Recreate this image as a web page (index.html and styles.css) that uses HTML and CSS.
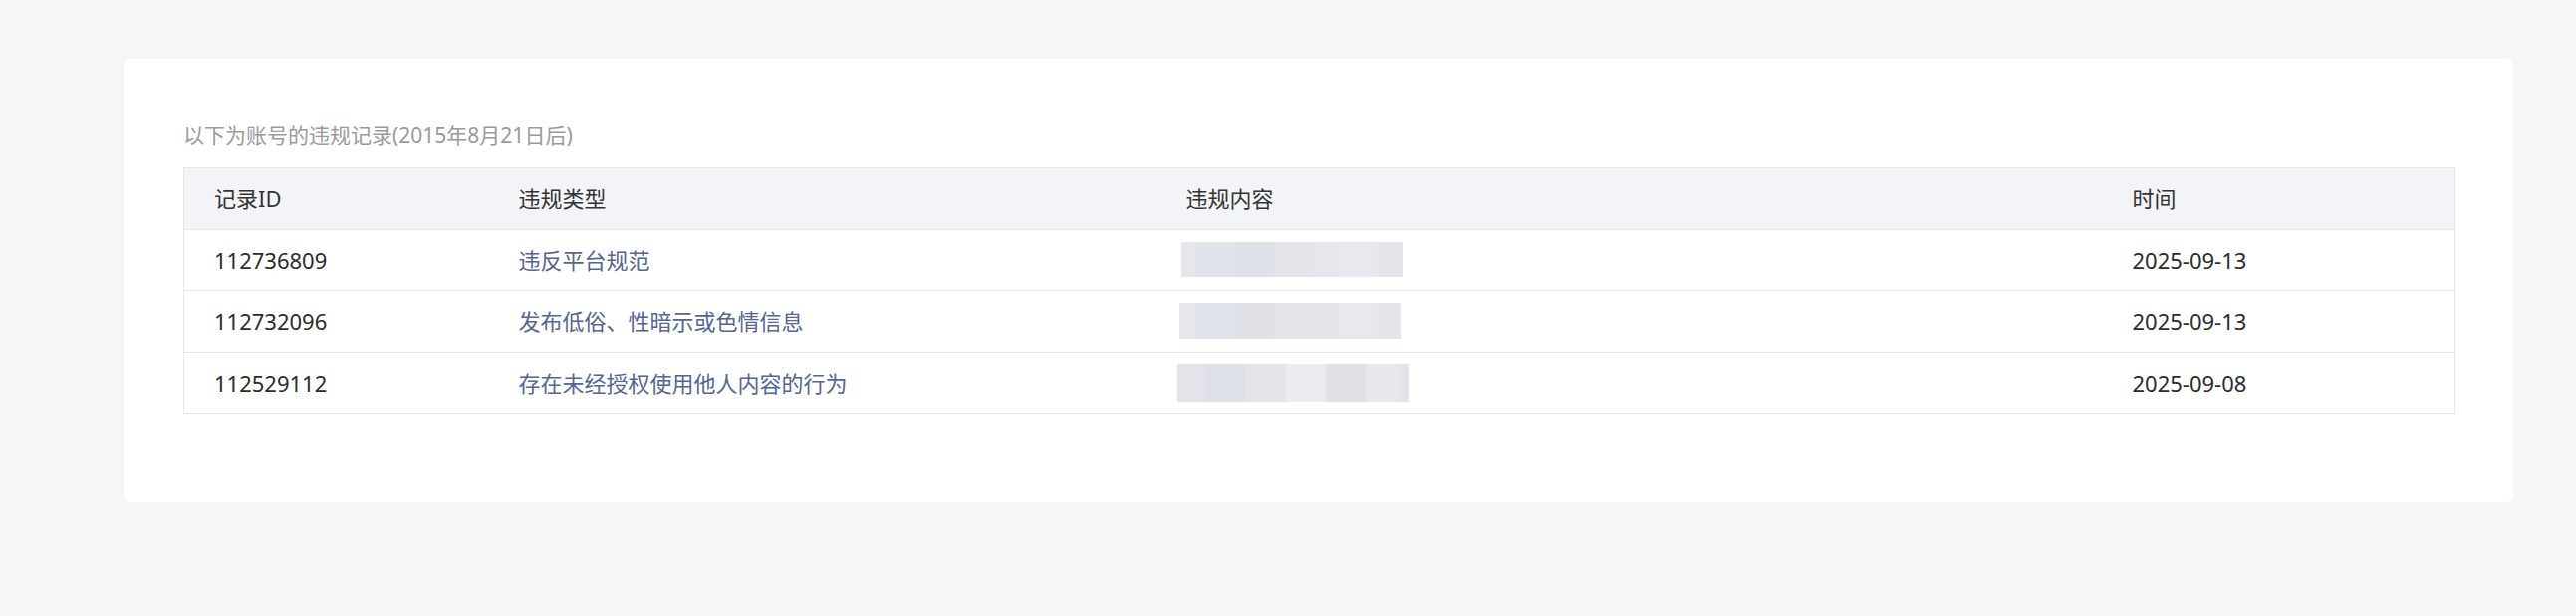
FILE: index.html
```html
<!DOCTYPE html>
<html lang="zh-CN">
<head>
<meta charset="utf-8">
<title>违规记录</title>
<link rel="stylesheet" href="styles.css">
</head>
<body>
<div class="page">
  <section class="card">
    <p class="note">以下为账号的违规记录(2015年8月21日后)</p>
    <table class="records">
      <colgroup>
        <col class="c-id"><col class="c-type"><col class="c-content"><col class="c-time">
      </colgroup>
      <thead>
        <tr><th>记录ID</th><th>违规类型</th><th>违规内容</th><th>时间</th></tr>
      </thead>
      <tbody>
        <tr>
          <td>112736809</td>
          <td class="type">违反平台规范</td>
          <td><span class="blur blur-1"></span></td>
          <td>2025-09-13</td>
        </tr>
        <tr>
          <td>112732096</td>
          <td class="type">发布低俗、性暗示或色情信息</td>
          <td><span class="blur blur-2"></span></td>
          <td>2025-09-13</td>
        </tr>
        <tr>
          <td>112529112</td>
          <td class="type">存在未经授权使用他人内容的行为</td>
          <td><span class="blur blur-3"></span></td>
          <td>2025-09-08</td>
        </tr>
      </tbody>
    </table>
  </section>
</div>
</body>
</html>
```

FILE: styles.css
```css
html, body {
  margin: 0;
  padding: 0;
}
body {
  background: #f6f7f9;
  font-family: "Noto Sans", "Noto Sans CJK SC", sans-serif;
  color: #333;
}
.page {
  padding: 59px 63px 115px 124px;
}
.card {
  background: #fff;
  border-radius: 6px;
  box-shadow: 0 0 12px rgba(0, 0, 0, 0.02);
  padding: 61px 59px 89px 60px;
}
.note {
  margin: 0 0 18px;
  font-size: 21px;
  line-height: 30px;
  color: #9a9a9a;
}
.records {
  width: 100%;
  border-collapse: collapse;
  table-layout: fixed;
  border: 1px solid #e5e6eb;
  font-size: 22px;
}
.c-id { width: 306px; }
.c-type { width: 670px; }
.c-content { width: 950px; }
.c-time { width: 354px; }
.records th,
.records td {
  text-align: left;
  font-weight: 400;
  height: 60.5px;
  padding: 0 0 0 30px;
  line-height: 30px;
  vertical-align: middle;
  border-bottom: 1px solid #e5e6eb;
  white-space: nowrap;
}
.records th {
  background: #f3f4f8;
  color: #333;
}
.records td {
  color: #2b2b2b;
}
.records td.type {
  color: #55658f;
}
.blur {
  display: block;
  margin-left: -5px;
  height: 35px;
}
.blur-1 {
  width: 222px;
  background: linear-gradient(90deg,
    #e6e7ec 0 14px, #e1e3ea 14px 54px, #dfe1e8 54px 93px,
    #e3e5ea 93px 133px, #e6e7ec 133px 158px, #e8e9ee 158px 197px,
    #e4e5eb 197px 222px);
}
.blur-2 {
  width: 222px;
  margin-left: -7px;
  height: 36px;
  background: linear-gradient(90deg,
    #e7e8ed 0 16px, #e1e3ea 16px 56px, #dfe1e7 56px 95px,
    #e3e5ea 95px 159px, #e8e9ee 159px 199px, #e4e5eb 199px 222px);
}
.blur-3 {
  width: 232px;
  margin-left: -9px;
  height: 38px;
  background: linear-gradient(90deg,
    #e3e4e9 0 28px, #dfe1e9 28px 68px, #e4e5ea 68px 109px,
    #ebecf0 109px 149px, #e0e1e7 149px 189px, #e7e8ed 189px 223px,
    #e3e4e9 223px 232px);
}
```
